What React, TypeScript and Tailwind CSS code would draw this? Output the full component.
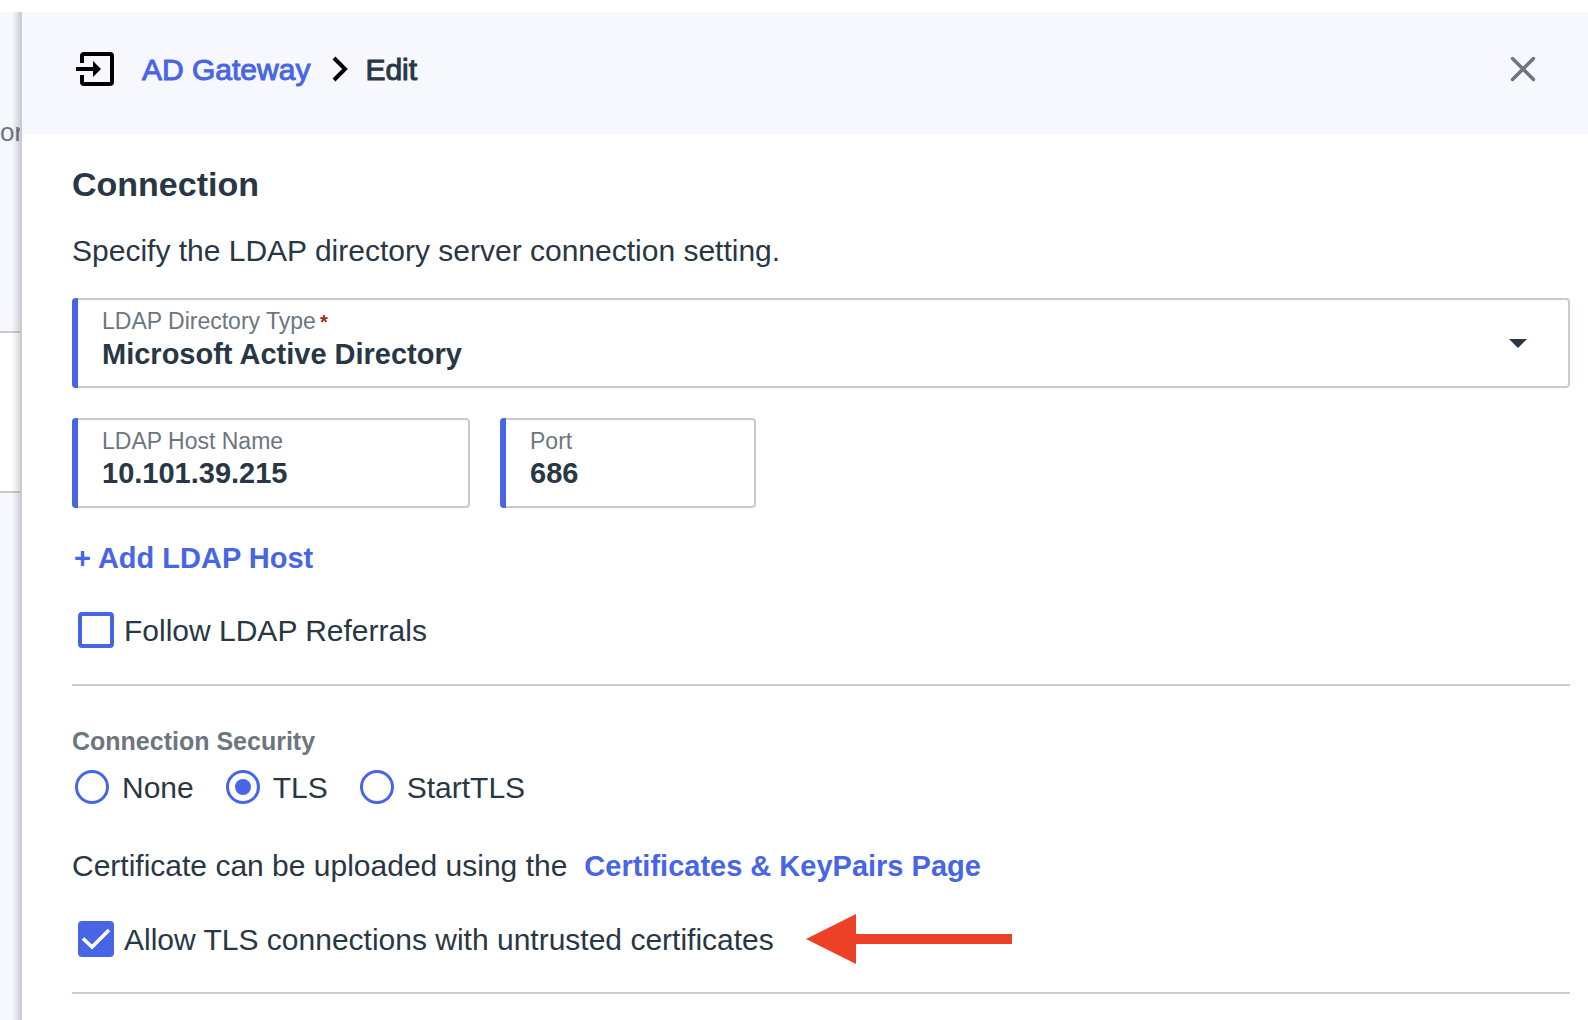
import { useState } from "react";
import type { ReactNode } from "react";

function Field({ id, label, required, className, children }: { id: string; label: string; required?: boolean; className: string; children: ReactNode }) {
  return (
    <div className={`relative flex h-[90px] rounded border-2 border-[#c9cbd2] border-l-0 ${className}`}>
      <span className="-my-0.5 w-1.5 shrink-0 rounded-l bg-[#4865e6]" />
      <div className="min-w-0 flex-1 pl-6">
        <label htmlFor={id} className="mt-[7px] block text-[23px] leading-[28px] text-[#6b7680]">
          {label}
          {required && <span className="ml-1 text-[20px] font-bold text-[#a0281c]">*</span>}
        </label>
        {children}
      </div>
    </div>
  );
}

function Tick({ id, label, checked, onChange }: { id: string; label: string; checked: boolean; onChange: () => void }) {
  return (
    <label htmlFor={id} className="ml-1.5 flex h-9 items-center gap-2.5">
      <span className="relative flex size-9">
        <input
          id={id}
          type="checkbox"
          checked={checked}
          onChange={onChange}
          className="size-9 appearance-none rounded border-4 border-[#4865e6] bg-white checked:bg-[#4865e6]"
        />
        {checked && (
          <svg viewBox="0 0 36 36" className="pointer-events-none absolute inset-0 size-9" fill="none" stroke="#fff" strokeWidth="3.6">
            <path d="M5 17.5 L14 26 L31 9" />
          </svg>
        )}
      </span>
      <span className="pt-0.5">{label}</span>
    </label>
  );
}

const modes = ["None", "TLS", "StartTLS"];

export default function App() {
  const [referrals, setReferrals] = useState(false);
  const [untrusted, setUntrusted] = useState(true);
  const [mode, setMode] = useState("TLS");

  return (
    <div className="h-screen overflow-hidden bg-white pt-3 font-['Liberation_Sans',sans-serif] text-[30px] leading-[36px] text-[#293745]">
      <div className="flex h-full">
        <aside className="relative flex w-5 shrink-0 flex-col overflow-hidden bg-[#f6f8fe] text-[26px] text-[#6b7680]">
          <div className="h-[319px] pt-[102px]">or</div>
          <div className="h-[162px] border-y-2 border-[#c9cbd2] bg-white" />
          <div className="absolute inset-y-0 right-0 w-2 bg-linear-to-r from-black/0 to-black/15" />
        </aside>

        <main className="min-w-0 flex-1 border-l-2 border-[#c9cdd2]">
          <header className="flex h-[122px] items-center bg-[#f6f8fe] pr-[50px] pb-2 pl-[54px]">
            <svg viewBox="0 0 38 34" className="h-[34px] w-[38px]" fill="none" stroke="#000" strokeWidth="4">
              <path d="M6 11 V4 Q6 2 8 2 H34 Q36 2 36 4 V30 Q36 32 34 32 H8 Q6 32 6 30 V23" />
              <path d="M0 17 H19" />
              <path d="M17 9 L25 17 L17 25 Z" fill="#000" stroke="none" />
            </svg>
            <nav className="ml-7 flex items-center">
              <a href="#gateway" className="pt-0.5 [-webkit-text-stroke:1px] text-[#4865e6]">AD Gateway</a>
              <svg viewBox="0 0 16 26" className="mr-[17px] ml-[22px] h-[26px] w-4" fill="none" stroke="#000" strokeWidth="4">
                <path d="M2 2 L13 13 L2 24" />
              </svg>
              <span className="pt-0.5 [-webkit-text-stroke:1px]">Edit</span>
            </nav>
            <button aria-label="Close" className="ml-auto p-0.5">
              <svg viewBox="0 0 26 26" className="size-[26px]" stroke="#6b7680" strokeWidth="3.4" strokeLinecap="round">
                <path d="M2.5 2.5 L23.5 23.5 M23.5 2.5 L2.5 23.5" />
              </svg>
            </button>
          </header>

          <div className="pr-[18px] pl-[50px]">
            <h1 className="pt-[30px] text-[34px] leading-[40px] font-bold">Connection</h1>
            <p className="mt-[29px]">Specify the LDAP directory server connection setting.</p>

            <Field id="type" label="LDAP Directory Type" required className="mt-[29px] w-full">
              <select id="type" className="block w-full appearance-none bg-transparent text-[29px] leading-[36px] font-bold outline-none">
                <option>Microsoft Active Directory</option>
              </select>
              <svg viewBox="0 0 18 9" className="pointer-events-none absolute top-[39px] right-[41px] h-[9px] w-[18px]" fill="#293745">
                <path d="M0 0 H18 L9 9 Z" />
              </svg>
            </Field>

            <div className="mt-[30px] flex gap-[30px]">
              <Field id="host" label="LDAP Host Name" className="w-[398px]">
                <input id="host" defaultValue="10.101.39.215" className="block w-full bg-transparent text-[29px] leading-[36px] font-bold outline-none" />
              </Field>
              <Field id="port" label="Port" className="w-64">
                <input id="port" defaultValue="686" className="block w-full bg-transparent text-[29px] leading-[36px] font-bold outline-none" />
              </Field>
            </div>

            <button className="mt-8 ml-0.5 block text-[29px] font-bold text-[#4865e6]">+ Add LDAP Host</button>
            <div className="mt-9">
              <Tick id="referrals" label="Follow LDAP Referrals" checked={referrals} onChange={() => setReferrals(!referrals)} />
            </div>
            <hr className="mt-9 border-t-2 border-[#c9cdd2]" />

            <fieldset className="mt-[37px]">
              <legend className="text-[25px] leading-[36px] font-bold text-[#6b7680]">Connection Security</legend>
              <div className="mt-[9px] ml-[3px] flex gap-8">
                {modes.map((m) => (
                  <label key={m} className="flex items-center gap-[13px]">
                    <input
                      type="radio"
                      name="security"
                      checked={mode === m}
                      onChange={() => setMode(m)}
                      className="size-[34px] appearance-none rounded-full border-[3px] border-[#4865e6] bg-clip-content p-[6px] checked:bg-[#4865e6]"
                    />
                    <span className="pt-0.5">{m}</span>
                  </label>
                ))}
              </div>
            </fieldset>

            <p className="mt-[42px] flex gap-[17px]">
              Certificate can be uploaded using the
              <a href="#certificates" className="text-[29px] font-bold text-[#4865e6]">Certificates &amp; KeyPairs Page</a>
            </p>

            <div className="mt-[30px] flex h-[50px] items-center gap-8">
              <Tick id="untrusted" label="Allow TLS connections with untrusted certificates" checked={untrusted} onChange={() => setUntrusted(!untrusted)} />
              <svg viewBox="0 0 206 50" className="h-[50px] w-[206px]" fill="#ec4127">
                <path d="M0 25 L50 0 V20 H206 V30 H50 V50 Z" />
              </svg>
            </div>
            <hr className="mt-7 border-t-2 border-[#c9cdd2]" />
          </div>
        </main>
      </div>
    </div>
  );
}
